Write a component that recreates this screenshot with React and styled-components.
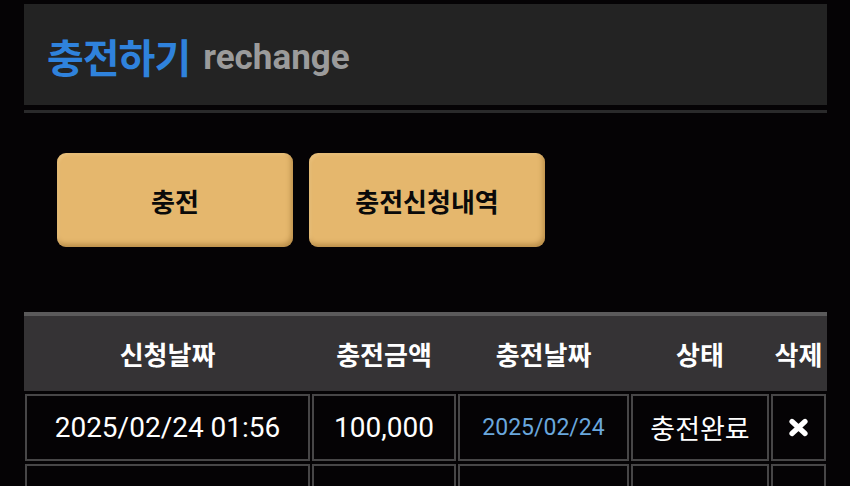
import React from 'react'
import styled, { createGlobalStyle } from 'styled-components'

const GlobalStyle = createGlobalStyle`
body{
    margin:0;
    background:#050305;
    font-family:Roboto,"Noto Sans CJK KR",sans-serif;
}
`

const cols = '285px 144px 171px 138px 55px'

const rows = [
    { reqDate: '2025/02/24 01:56', amount: '100,000', doneDate: '2025/02/24', status: '충전완료' },
    { reqDate: '', amount: '', doneDate: '', status: '', empty: true },
]

function CrossIcon() {
    return (
        <svg width="21" height="19" viewBox="0 0 21 19">
            <path d="M4 3.5 L17 15.5 M17 3.5 L4 15.5" stroke="#fff" strokeWidth="5.2" strokeLinecap="round" />
        </svg>
    )
}

function App() {
    return (
        <Page>
            <GlobalStyle />
            <TitleBar>
                <TitleKo>충전하기</TitleKo>
                <TitleEn>rechange</TitleEn>
            </TitleBar>
            <Rule />
            <ButtonRow>
                <GoldButton>충전</GoldButton>
                <GoldButton>충전신청내역</GoldButton>
            </ButtonRow>
            <Table>
                <HeadRow>
                    <Th>신청날짜</Th>
                    <Th>충전금액</Th>
                    <Th>충전날짜</Th>
                    <Th>상태</Th>
                    <Th>삭제</Th>
                </HeadRow>
                {rows.map((row, i) => (
                    <BodyRow key={i}>
                        <Td>{row.reqDate}</Td>
                        <Td>{row.amount}</Td>
                        <Td $link>{row.doneDate}</Td>
                        <Td $ko>{row.status}</Td>
                        <Td>{!row.empty && <CrossIcon />}</Td>
                    </BodyRow>
                ))}
            </Table>
        </Page>
    )
}

const Page = styled.div`
padding:4px 23px 0 24px;
`
const TitleBar = styled.div`
height:101px;
background:#232323;
display:flex;
align-items:center;
padding-left:23px;
gap:13px;
box-sizing:border-box;
padding-top:2px;
`
const TitleKo = styled.span`
color:#2f82dc;
font-size:40px;
font-weight:700;
letter-spacing:-1px;
`
const TitleEn = styled.span`
color:#9b9b9b;
font-size:35px;
font-weight:700;
padding-top:4px;
`
const Rule = styled.div`
margin-top:5px;
height:3px;
background:#2a2a2b;
`
const ButtonRow = styled.div`
display:flex;
gap:16px;
padding:40px 0 0 33px;
`
const GoldButton = styled.button`
width:236px;
height:94px;
border:none;
border-radius:9px;
background:#e5b76d;
box-shadow:inset -2px -3px 5px rgba(120,80,20,0.4), inset 2px 2px 3px rgba(255,230,180,0.25);
font-family:"Noto Sans CJK KR",sans-serif;
font-size:26px;
font-weight:700;
color:#0a0a0a;
padding:0;
`
const Table = styled.div`
margin-top:65px;
`
const HeadRow = styled.div`
display:grid;
grid-template-columns:${cols};
column-gap:2px;
padding-left:1px;
height:79px;
box-sizing:border-box;
border-top:4px solid #5b5a5b;
background:#353335;
align-items:center;
`
const Th = styled.div`
text-align:center;
color:#fff;
font-family:"Noto Sans CJK KR",sans-serif;
font-size:26px;
font-weight:700;
white-space:nowrap;
`
const BodyRow = styled.div`
display:grid;
grid-template-columns:${cols};
column-gap:2px;
padding-left:1px;
margin-top:3px;
`
const Td = styled.div`
height:67px;
box-sizing:border-box;
border:2px solid #474647;
display:flex;
align-items:center;
justify-content:center;
color:${p => (p.$link ? '#6aa7dd' : '#fff')};
font-size:${p => (p.$link ? '23px' : p.$ko ? '27px' : '28px')};
white-space:nowrap;
`

export default App
